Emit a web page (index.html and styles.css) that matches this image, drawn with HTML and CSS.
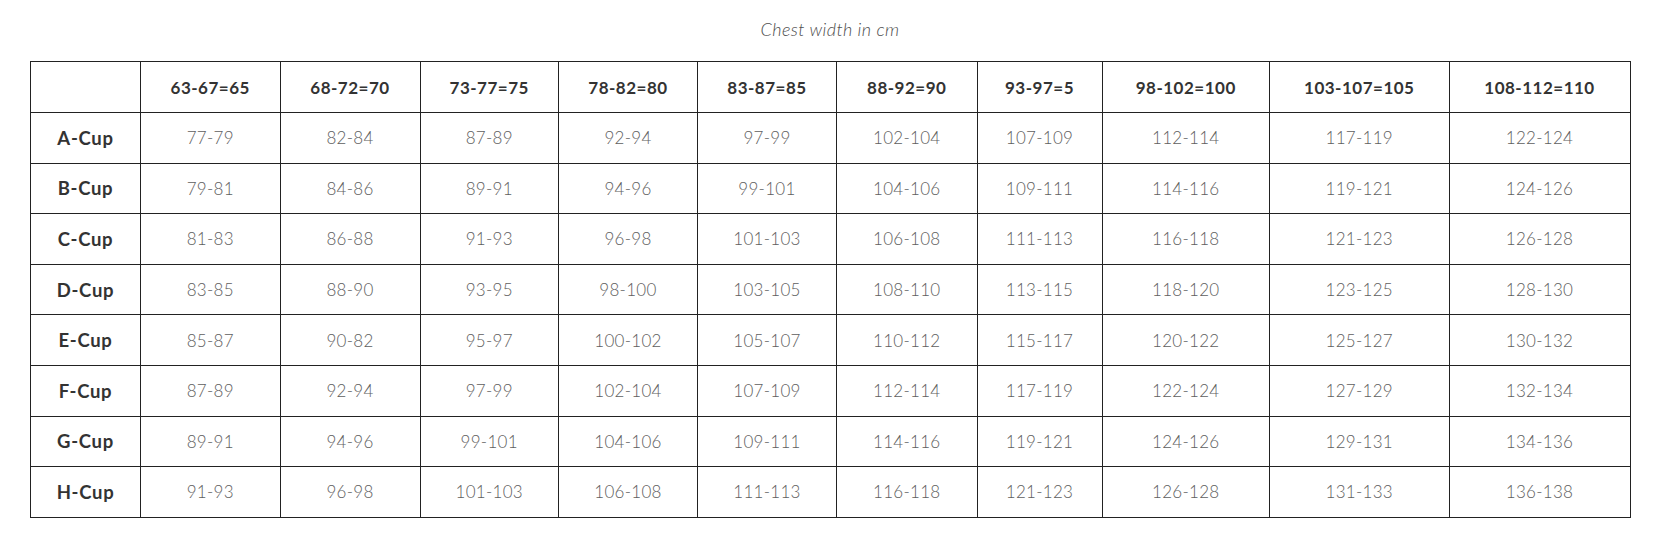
FILE: index.html
```html
<!DOCTYPE html>
<html>
<head>
<meta charset="utf-8">
<link rel="stylesheet" href="styles.css">
</head>
<body>
<div class="wrap">
  <p class="caption">Chest width in cm</p>
  <table class="sizes">
    <colgroup>
      <col class="c0"><col class="c1"><col class="c2"><col class="c3"><col class="c4"><col class="c5"><col class="c6"><col class="c7"><col class="c8"><col class="c9"><col class="c10">
    </colgroup>
    <thead>
      <tr class="head">
        <th></th><th>63-67=65</th><th>68-72=70</th><th>73-77=75</th><th>78-82=80</th><th>83-87=85</th><th>88-92=90</th><th>93-97=5</th><th>98-102=100</th><th>103-107=105</th><th>108-112=110</th>
      </tr>
    </thead>
    <tbody>
      <tr><th class="cup">A-Cup</th><td>77-79</td><td>82-84</td><td>87-89</td><td>92-94</td><td>97-99</td><td>102-104</td><td>107-109</td><td>112-114</td><td>117-119</td><td>122-124</td></tr>
      <tr><th class="cup">B-Cup</th><td>79-81</td><td>84-86</td><td>89-91</td><td>94-96</td><td>99-101</td><td>104-106</td><td>109-111</td><td>114-116</td><td>119-121</td><td>124-126</td></tr>
      <tr><th class="cup">C-Cup</th><td>81-83</td><td>86-88</td><td>91-93</td><td>96-98</td><td>101-103</td><td>106-108</td><td>111-113</td><td>116-118</td><td>121-123</td><td>126-128</td></tr>
      <tr><th class="cup">D-Cup</th><td>83-85</td><td>88-90</td><td>93-95</td><td>98-100</td><td>103-105</td><td>108-110</td><td>113-115</td><td>118-120</td><td>123-125</td><td>128-130</td></tr>
      <tr><th class="cup">E-Cup</th><td>85-87</td><td>90-82</td><td>95-97</td><td>100-102</td><td>105-107</td><td>110-112</td><td>115-117</td><td>120-122</td><td>125-127</td><td>130-132</td></tr>
      <tr><th class="cup">F-Cup</th><td>87-89</td><td>92-94</td><td>97-99</td><td>102-104</td><td>107-109</td><td>112-114</td><td>117-119</td><td>122-124</td><td>127-129</td><td>132-134</td></tr>
      <tr><th class="cup">G-Cup</th><td>89-91</td><td>94-96</td><td>99-101</td><td>104-106</td><td>109-111</td><td>114-116</td><td>119-121</td><td>124-126</td><td>129-131</td><td>134-136</td></tr>
      <tr><th class="cup">H-Cup</th><td>91-93</td><td>96-98</td><td>101-103</td><td>106-108</td><td>111-113</td><td>116-118</td><td>121-123</td><td>126-128</td><td>131-133</td><td>136-138</td></tr>
    </tbody>
  </table>
</div>
</body>
</html>
```

FILE: styles.css
```css
html, body {
  margin: 0;
  padding: 0;
  background: #ffffff;
}

.wrap {
  padding: 17px 28px 0 30px;
}

.caption {
  margin: 0 0 20px;
  height: 24px;
  line-height: 24px;
  text-align: center;
  font-family: "Lato", "Open Sans", sans-serif;
  font-style: italic;
  font-weight: 300;
  font-size: 18px;
  letter-spacing: 0.4px;
  color: #4d4d4d;
}

.sizes {
  width: 1600px;
  border-collapse: collapse;
  table-layout: fixed;
  font-family: "Lato", "Open Sans", sans-serif;
}

.c0 { width: 110px; }
.c1 { width: 139.5px; }
.c2 { width: 140px; }
.c3 { width: 138.5px; }
.c4 { width: 139px; }
.c5 { width: 139px; }
.c6 { width: 140.5px; }
.c7 { width: 125px; }
.c8 { width: 167.5px; }
.c9 { width: 179.5px; }
.c10 { width: 181px; }

.sizes th,
.sizes td {
  border: 1px solid #222222;
  text-align: center;
  vertical-align: middle;
  padding: 0;
  font-size: 17px;
}

.sizes th {
  font-weight: 700;
  color: #333333;
  letter-spacing: 0.5px;
}

.sizes th.cup {
  font-size: 18.5px;
  letter-spacing: 0.7px;
}

.sizes td {
  font-weight: 300;
  color: #5e5e5e;
  letter-spacing: 0.3px;
}

.head {
  height: 51px;
}

.sizes tbody tr {
  height: 50.6px;
}
```
